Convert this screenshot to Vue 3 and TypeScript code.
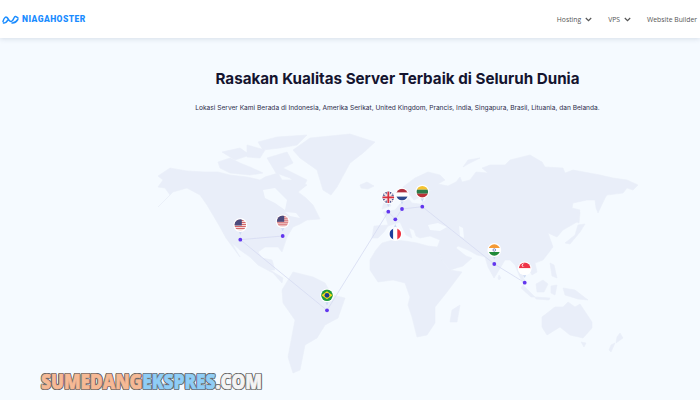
<script setup lang="ts">
const land: string[] = [
  // north america
  '158,176 170,168 187,171 205,172 218,172 230,175 247,177 260,180 265,177 278,173 282,180 293,180 307,185 298,192 306,198 313,205 320,219 307,220 300,224 293,227 290,232 287,237 282,252 278,247 265,247 258,252 262,258 272,260 275,270 270,270 283,278 282,283 273,273 258,265 250,257 240,250 232,243 240,257 226,238 220,227 207,205 200,195 187,188 173,192 158,207 170,195 165,188 158,187 163,180',
  // arctic islands
  '258,142 277,137 307,135 297,145 280,148 263,150',
  '218,162 230,158 240,163 250,167 263,173 250,175 230,173 220,168',
  '222,152 240,148 250,155 235,160',
  '247,145 265,150 260,158 247,157',
  '267,158 287,152 293,163 283,168 307,180 303,188 290,178 276,173',
  // greenland and iceland
  '293,150 310,138 350,134 375,142 363,153 350,163 337,187 331,195 323,190 317,170 300,158',
  '360,185 367,182 374,186 368,189 361,188',
  // south america
  '282,290 293,272 313,277 325,283 332,295 345,298 338,318 325,325 317,338 305,345 300,370 293,373 288,357 295,320 283,303',
  // africa
  '370,260 376,250 382,243 393,240 405,241 417,243 428,246 437,247 443,262 450,270 462,272 447,292 435,307 435,323 427,335 417,337 412,317 408,305 410,297 405,283 393,280 378,282 370,270',
  // madagascar
  '460,305 457,322 450,322 452,310',
  // eurasia
  '372,238 374,226 388,225 386,218 383,212 395,210 400,204 408,198 412,203 420,204 426,200 424,193 432,190 424,190 420,197 414,200 409,194 403,193 403,187 415,178 428,172 440,175 445,180 438,184 448,186 456,182 460,177 462,182 470,180 476,172 488,173 482,168 490,165 505,165 510,160 530,155 542,162 545,167 563,168 565,173 573,170 600,175 613,178 627,180 638,185 633,190 627,188 623,193 607,195 605,198 598,213 596,208 595,200 587,200 573,203 572,208 580,210 577,222 563,230 557,237 548,233 553,247 543,260 535,263 537,272 532,275 528,268 523,278 527,283 523,283 519,275 515,265 510,260 505,260 502,265 496,275 494,278 488,267 485,257 477,255 468,250 458,246 456,248 466,256 472,258 463,266 450,270 443,262 437,248 440,240 430,236 420,238 416,236 414,230 409,228 412,238 406,235 400,222 394,224 388,226 384,232 378,238',
  // british isles
  '382,197 387,194 391,206 382,209 384,202',
  // islands of asia
  '463,167 468,160 480,158 470,163',
  '578,210 580,212 579,223 577,222',
  '565,243 575,235 578,225 585,224 580,232 570,244',
  '550,263 554,265 557,278 552,276',
  '536,284 543,280 548,284 544,292 537,292',
  '523,285 535,297 531,297 521,288',
  '535,297 550,298 549,300 536,299',
  '551,286 557,285 555,295 551,293',
  '563,288 575,290 588,300 578,299 565,295',
  '499,275 501,278 499,280 498,278',
  // australia and around
  '542,317 555,307 563,307 568,302 575,307 580,304 592,322 592,328 583,338 570,335 560,327 547,335 542,327',
  '581,342 586,343 584,347',
  '620,333 623,338 616,343 617,337',
  '615,343 611,352 609,350 611,345',
]

// the bits of water cut out of the land
const water: string[] = [
  '263,190 275,188 287,200 285,210 275,203 265,198',
  '285,212 296,213 300,218 290,216',
  '428,225 438,223 447,227 440,231 430,230',
  '459,226 463,228 464,238 460,236',
]

const lines: [number, number, number, number][] = [
  [240.3, 239.7, 282.7, 236],
  [240.3, 239.7, 327, 310.3],
  [327, 310.3, 388.3, 211.7],
  [388.3, 211.7, 395.3, 219.3],
  [395.3, 219.3, 402, 209],
  [402, 209, 422.3, 206.7],
  [422.3, 206.7, 494.3, 264],
  [494.3, 264, 524.7, 282.7],
]

type Pin = { code: string; x: number; y: number; dy: number }

const pins: Pin[] = [
  { code: 'us', x: 240.3, y: 239.7, dy: -14.7 },
  { code: 'us', x: 282.7, y: 236, dy: -14.7 },
  { code: 'gb', x: 388.3, y: 211.7, dy: -14.4 },
  { code: 'nl', x: 402, y: 209, dy: -14.4 },
  { code: 'lt', x: 422.3, y: 206.7, dy: -15 },
  { code: 'fr', x: 395.3, y: 219.3, dy: 14.7 },
  { code: 'in', x: 494.3, y: 264, dy: -14 },
  { code: 'sg', x: 524.7, y: 282.7, dy: -14.4 },
  { code: 'br', x: 327, y: 310.3, dy: -15 },
]

const usStripes = [-5, -3, -1, 1, 3]
</script>

<template>
  <div class="page">
    <header class="topbar">
      <a class="logo">
        <svg width="17" height="9" viewBox="0 0 17 9" fill="none">
          <path
            d="M1 6.5C2 2.5 4 1 5.5 3S8 7.5 10 6 12 1 13.5 1.5 16 3 16 3M1.5 8C3.5 8.5 5 6.5 6 5M10 8C12.5 8.2 14.5 6.5 15.8 4.5"
            stroke="#1a8cff"
            stroke-width="1.5"
            stroke-linecap="round"
          />
        </svg>
        <span>NIAGAHOSTER</span>
      </a>
      <nav class="menu">
        <a class="menu-item">
          Hosting
          <svg class="chev" width="7" height="5" viewBox="0 0 7 5" fill="none"><path d="M.8 1l2.7 2.7L6.2 1" stroke="#555" stroke-width="1.2" /></svg>
        </a>
        <a class="menu-item">
          VPS
          <svg class="chev" width="7" height="5" viewBox="0 0 7 5" fill="none"><path d="M.8 1l2.7 2.7L6.2 1" stroke="#555" stroke-width="1.2" /></svg>
        </a>
        <a class="menu-item">Website Builder</a>
      </nav>
    </header>

    <main class="hero">
      <h1>Rasakan Kualitas Server Terbaik di Seluruh Dunia</h1>
      <p>Lokasi Server Kami Berada di Indonesia, Amerika Serikat, United Kingdom, Prancis, India, Singapura, Brasil, Lituania, dan Belanda.</p>

      <svg class="map" width="495" height="260" viewBox="150 120 495 260">
        <defs>
          <clipPath id="flag-clip"><circle r="5.8" /></clipPath>
        </defs>
        <polygon v-for="(pts, i) in land" :key="i" :points="pts" fill="#e9eef9" stroke="#e9eef9" stroke-width="0.6" stroke-linejoin="round" />
        <polygon v-for="(pts, i) in water" :key="'w' + i" :points="pts" fill="#f5faff" />
        <line
          v-for="(l, i) in lines"
          :key="'l' + i"
          :x1="l[0]"
          :y1="l[1]"
          :x2="l[2]"
          :y2="l[3]"
          stroke="#d5dbf1"
          stroke-width="0.8"
        />
        <g v-for="(p, i) in pins" :key="'p' + i">
          <path
            :d="`M${p.x - 2} ${p.y + p.dy * 0.62}L${p.x + 2} ${p.y + p.dy * 0.62}L${p.x} ${p.y + p.dy * 0.32}Z`"
            fill="#ccd9f3"
          />
          <circle :cx="p.x" :cy="p.y" r="1.9" fill="#6236ee" />
          <g :transform="`translate(${p.x} ${p.y + p.dy})`">
            <circle r="6.9" fill="#fff" />
            <g clip-path="url(#flag-clip)">
              <template v-if="p.code === 'us'">
                <rect x="-6" y="-6" width="12" height="12" fill="#f4dcdc" />
                <rect v-for="s in usStripes" :key="s" x="-6" :y="s" width="12" height="1" fill="#d4666b" />
                <rect x="-6" y="-6" width="7.5" height="6.5" fill="#4c4a7c" />
              </template>
              <template v-else-if="p.code === 'gb'">
                <rect x="-6" y="-6" width="12" height="12" fill="#3a4a8c" />
                <path d="M-6 -6L6 6M6 -6L-6 6" stroke="#f3e6e8" stroke-width="2" />
                <path d="M0 -6V6M-6 0H6" stroke="#f3e6e8" stroke-width="3.2" />
                <path d="M0 -6V6M-6 0H6" stroke="#d8303f" stroke-width="1.7" />
              </template>
              <template v-else-if="p.code === 'nl'">
                <rect x="-6" y="-6" width="12" height="4" fill="#b0303f" />
                <rect x="-6" y="-2" width="12" height="4" fill="#fff" />
                <rect x="-6" y="2" width="12" height="4" fill="#2f4a8f" />
              </template>
              <template v-else-if="p.code === 'lt'">
                <rect x="-6" y="-6" width="12" height="4" fill="#f5c331" />
                <rect x="-6" y="-2" width="12" height="4" fill="#2c7a4b" />
                <rect x="-6" y="2" width="12" height="4" fill="#bb3038" />
              </template>
              <template v-else-if="p.code === 'fr'">
                <rect x="-6" y="-6" width="4" height="12" fill="#1f3f9c" />
                <rect x="-2" y="-6" width="4" height="12" fill="#fff" />
                <rect x="2" y="-6" width="4" height="12" fill="#ee3342" />
              </template>
              <template v-else-if="p.code === 'in'">
                <rect x="-6" y="-6" width="12" height="4" fill="#f59a35" />
                <rect x="-6" y="-2" width="12" height="4" fill="#fff" />
                <rect x="-6" y="2" width="12" height="4" fill="#1f8a3a" />
                <circle r="1.3" fill="none" stroke="#3a4a9c" stroke-width="0.6" />
              </template>
              <template v-else-if="p.code === 'sg'">
                <rect x="-6" y="-6" width="12" height="6" fill="#ee3347" />
                <rect x="-6" y="0" width="12" height="6" fill="#fff" />
                <circle cx="-1.2" cy="-3" r="1.7" fill="#fff" />
                <circle cx="-0.4" cy="-3" r="1.6" fill="#ee3347" />
              </template>
              <template v-else>
                <rect x="-6" y="-6" width="12" height="12" fill="#1f9a3c" />
                <path d="M-5.6 0L0 -4L5.6 0L0 4Z" fill="#f6d91e" />
                <circle r="2.4" fill="#1d3a8c" />
              </template>
            </g>
          </g>
        </g>
      </svg>
    </main>

    <div class="watermark"><span class="peach">SUMEDANG</span><span class="sky">EKSPRES</span><span class="snow">.COM</span></div>
  </div>
</template>

<style scoped>
.page {
  position: relative;
  width: 700px;
  height: 400px;
  overflow: hidden;
  background: #f5faff;
  font-family: Inter, "Liberation Sans", sans-serif;
}

.topbar {
  height: 38px;
  box-sizing: border-box;
  padding: 0 3px 0 2px;
  display: flex;
  align-items: center;
  justify-content: space-between;
  background: #fff;
  box-shadow: 0 1px 5px rgba(30, 50, 90, 0.14);
}

.logo {
  display: flex;
  align-items: center;
  gap: 3px;
  color: #1a8cff;
  font-family: Roboto, sans-serif;
  font-size: 8.5px;
  font-weight: 900;
  letter-spacing: 0.45px;
}

.menu {
  display: flex;
  align-items: center;
  gap: 16px;
  color: #555;
  font-family: "Open Sans", sans-serif;
  font-size: 6.8px;
}

.menu-item {
  display: flex;
  align-items: center;
}

.chev {
  margin-left: 4px;
}

.hero {
  padding-left: 95px;
  display: flex;
  flex-direction: column;
  align-items: center;
}

h1 {
  margin: 31px 0 0;
  font-size: 15.2px;
  line-height: 20px;
  font-weight: 700;
  color: #14142f;
  white-space: nowrap;
}

p {
  margin: 14px 0 0;
  font-size: 6.6px;
  line-height: 10px;
  color: #2b2b4a;
  white-space: nowrap;
}

.map {
  display: block;
  margin-top: 7px;
  flex: none;
}

.watermark {
  position: absolute;
  left: 41px;
  top: 370px;
  font-family: "Open Sans", sans-serif;
  font-size: 21px;
  line-height: 22px;
  font-weight: 800;
  white-space: nowrap;
  transform: scaleX(0.82);
  transform-origin: left center;
  -webkit-text-stroke: 0.7px currentColor;
  text-shadow:
    1.3px 0 0 #666,
    -1.3px 0 0 #666,
    0 1.3px 0 #666,
    0 -1.3px 0 #666,
    1px 1px 0 #666,
    -1px 1px 0 #666,
    1px -1px 0 #666,
    -1px -1px 0 #666;
}

.peach {
  color: #f6b995;
}

.sky {
  color: #8fcdf6;
}

.snow {
  color: #f4f4f4;
}
</style>

<style>
html,
body {
  margin: 0;
  background: #f5faff;
}
</style>
